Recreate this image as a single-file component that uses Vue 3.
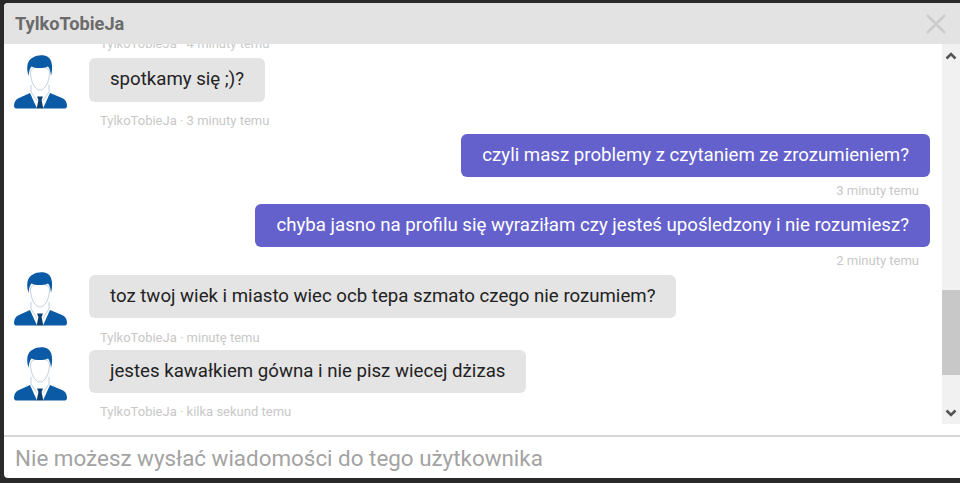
<script setup>
const items = [
  { type: 'them', text: 'spotkamy się ;)?', meta: 'TylkoTobieJa · 3 minuty temu', cls: 'first' },
  { type: 'me', text: 'czyli masz problemy z czytaniem ze zrozumieniem?', meta: '3 minuty temu' },
  { type: 'me', text: 'chyba jasno na profilu się wyraziłam czy jesteś upośledzony i nie rozumiesz?', meta: '2 minuty temu' },
  { type: 'them', text: 'toz twoj wiek i miasto wiec ocb tepa szmato czego nie rozumiem?', meta: 'TylkoTobieJa · minutę temu' },
  { type: 'them', text: 'jestes kawałkiem gówna i nie pisz wiecej dżizas', meta: 'TylkoTobieJa · kilka sekund temu' }
]
</script>

<template>
  <div class="page">
    <div class="modal">
      <header class="head">
        <span class="title">TylkoTobieJa</span>
        <svg class="close" width="22" height="22" viewBox="0 0 22 22">
          <path d="M2 2 L20 20 M20 2 L2 20" stroke="#cbcbcb" stroke-width="2.6" fill="none" />
        </svg>
      </header>
      <div class="body">
        <div class="list">
          <div class="clipped">TylkoTobieJa · 4 minuty temu</div>
          <div v-for="(m, i) in items" :key="i" class="msg" :class="[m.type, m.cls]">
            <div class="row">
              <svg v-if="m.type === 'them'" class="avatar" width="54" height="55" viewBox="0 0 54 55">
                <path fill="none" stroke="#b4c4d4" stroke-width="0.8" d="M18 30 L18 37 L24 46 M36 30 L36 37 L30 46" />
                <path fill="#fff" stroke="#b4c4d4" stroke-width="0.8" d="M17.5 17 C17.5 10 36.5 10 36.5 17 C36.5 27 32 35 27 35 C22 35 17.5 27 17.5 17 Z" />
                <path fill="#0a5aa5" d="M15.5 21 C13 13 14 5 20 2.5 C24 -0.5 32 -0.5 35 2 C39.5 5 40 13 38 21 C37.5 16 36.5 13 35 11.5 C30 13.5 23 13.5 18.5 11.5 C17 13 16 16 15.5 21 Z" />
                <path fill="#0a5aa5" d="M1 50.5 C1.5 46 3 44.5 6 43 L17 38 L24 53.5 L3 53.5 C1.8 53.5 1 52.5 1 50.5 Z" />
                <path fill="#0a5aa5" d="M54 50.5 C53.5 46 52 44.5 49 43 L37 38 L30 53.5 L52 53.5 C53.2 53.5 54 52.5 54 50.5 Z" />
                <path fill="#0d3f73" d="M24 41.5 L30 41.5 L28.6 45 L30.3 53.5 L23.7 53.5 L25.4 45 Z" />
              </svg>
              <div class="bubble">{{ m.text }}</div>
            </div>
            <div class="meta">{{ m.meta }}</div>
          </div>
        </div>
        <div class="scroll">
          <svg class="up" width="12" height="8" viewBox="0 0 12 8"><path d="M1.5 6.5 L6 2 L10.5 6.5" stroke="#555" stroke-width="2.6" fill="none" /></svg>
          <div class="track"><div class="thumb"></div></div>
          <svg class="down" width="12" height="8" viewBox="0 0 12 8"><path d="M1.5 1.5 L6 6 L10.5 1.5" stroke="#555" stroke-width="2.6" fill="none" /></svg>
        </div>
      </div>
      <div class="gap"></div>
      <footer class="foot">Nie możesz wysłać wiadomości do tego użytkownika</footer>
    </div>
  </div>
</template>

<style>
html, body { margin: 0; background: #2a2a2a; }
</style>

<style scoped>
.page {
  width: 960px;
  height: 483px;
  box-sizing: border-box;
  padding: 3px 0 5px 4px;
  font-family: Roboto, "Liberation Sans", sans-serif;
  overflow: hidden;
}
.modal {
  height: 100%;
  background: #fff;
  border-radius: 4px 0 0 4px;
  display: flex;
  flex-direction: column;
  overflow: hidden;
}
.head {
  height: 41px;
  flex: none;
  background: #e3e3e3;
  display: flex;
  align-items: center;
  justify-content: space-between;
  padding: 0 13px 0 11px;
}
.title { font-size: 18.2px; font-weight: 700; color: #6b6b6b; }
.body { height: 380px; flex: none; display: flex; overflow: hidden; }
.list { flex: 1; min-width: 0; padding: 0 12px 0 10px; overflow: hidden; }
.clipped {
  height: 14px;
  margin-top: -7px;
  padding-left: 86px;
  font-size: 13px;
  line-height: 14px;
  color: #c8c8c8;
}
.msg { display: flex; flex-direction: column; }
.row { display: flex; align-items: flex-start; gap: 22px; }
.avatar { flex: none; margin: -3px 0 -8px -1px; }
.bubble {
  font-size: 18.65px;
  line-height: 23px;
  padding: 10px 21px;
  border-radius: 6px;
  background: #e4e4e4;
  color: #222;
}
.meta {
  font-size: 13px;
  line-height: 14px;
  color: #c8c8c8;
  padding: 12px 0 6px 86px;
}
.them { margin-top: 1px; }
.them + .them { margin-top: -1px; }
.them + .them .meta { padding-top: 11px; }
.them.first { margin-top: 7px; }
.first .bubble { padding-bottom: 11px; }
.first .meta { padding: 12px 0 6px 86px; }
.me .row { justify-content: flex-end; }
.me .bubble { background: #6461cc; color: #fff; }
.me .meta { text-align: right; padding: 7px 11px 6px 0; }
.scroll {
  width: 18px;
  flex: none;
  background: #f1f1f1;
  display: flex;
  flex-direction: column;
  align-items: center;
}
.scroll svg { flex: none; }
.up { margin: 8px 0 4px; }
.down { margin: 4px 0 7px; }
.track { flex: 1; width: 100%; display: flex; flex-direction: column; justify-content: flex-end; padding-bottom: 30px; box-sizing: border-box; }
.thumb { height: 85px; background: #c8c8c8; }
.gap { height: 13px; flex: none; border-bottom: 2px solid #d6d6d6; box-sizing: border-box; }
.foot {
  flex: 1;
  display: flex;
  align-items: center;
  padding: 0 0 0 11px;
  font-size: 22.4px;
  color: #a3a3a3;
}
</style>
